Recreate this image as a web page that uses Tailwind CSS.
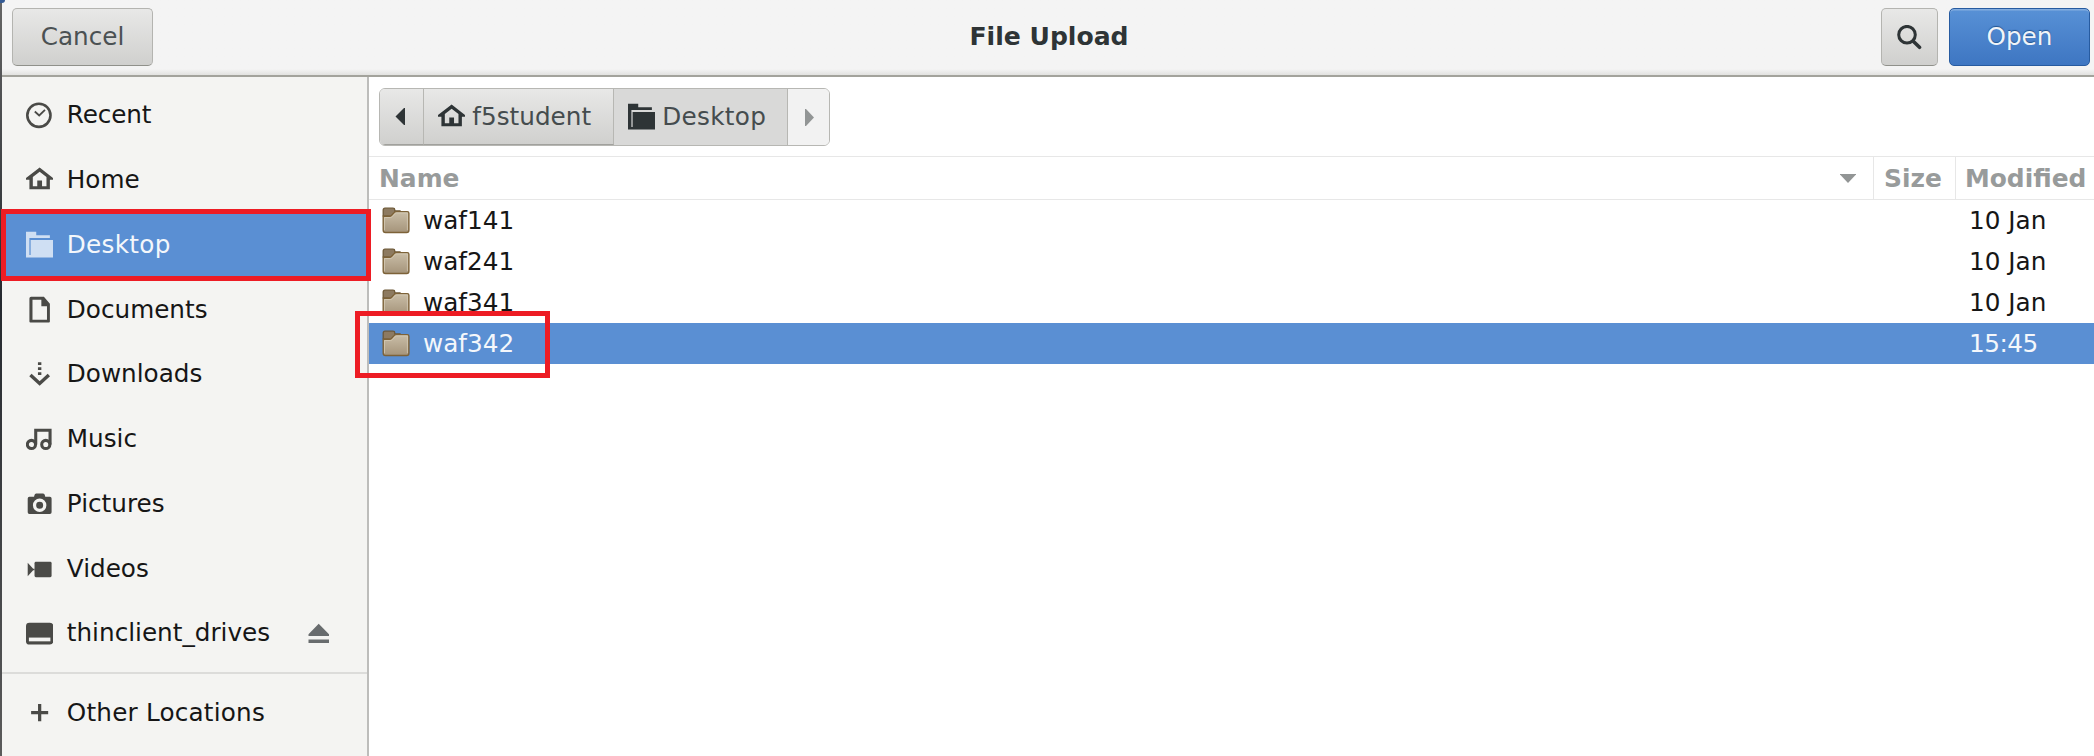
<!DOCTYPE html>
<html lang="en">
<head>
<meta charset="utf-8">
<title>File Upload</title>
<script src="https://cdn.jsdelivr.net/npm/@tailwindcss/browser@4"></script>
</head>
<body class="relative h-[756px] w-[2094px] overflow-hidden bg-white font-['DejaVu_Sans',sans-serif] text-[24.7px] leading-[30px] text-[#161616]">
<svg class="absolute size-0">
  <symbol id="home" viewBox="0 0 16 16"><path fill="currentColor" d="M8 .9 0 7.1V8h2v5.700h12V8h2v-.9L8 .9Zm0 2.400 4 3.100v5.400H9.400V8.500H6.600v3.300H4V6.400l4-3.100Z"/></symbol>
  <symbol id="folder" viewBox="0 0 16 16"><path fill="currentColor" d="M0 .5h6v2h8v1.600H2V14h.7V5.300H16v10.200H0V.5Z"/></symbol>
  <symbol id="filefolder" viewBox="0 0 28 28">
    <path fill="#8d7a60" stroke="#6d5837" stroke-width="1.300" d="M1.200 9V3q0-1.800 1.800-1.800h8q1.800 0 1.800 1.800v1H18v6Z"/>
    <path fill="url(#fg)" stroke="#7d6238" stroke-width="1.400" d="M1.200 9.200h6.500q1 0 1.800-.8l2.800-3q.7-.8 1.800-.8h11.200q1.600 0 1.600 1.600v17q0 2.300-2.300 2.300H3.500q-2.300 0-2.300-2.300Z"/>
    <path fill="none" stroke="#d9ceb9" stroke-opacity=".7" d="M2.500 23.300V10.500h6q1 0 1.800-.9l3-3.200q.5-.5 1.300-.5h10.800v17.200"/>
  </symbol>
  <defs><linearGradient id="fg" x1="0" y1="0" x2="0" y2="1"><stop offset="0" stop-color="#cabea8"/><stop offset="1" stop-color="#a5947a"/></linearGradient></defs>
</svg>
<div class="flex h-full">
  <div class="w-[2px] shrink-0 bg-linear-to-b from-[#666] via-[#25292f] via-40% to-[#5b5b5b]"></div>
  <div class="flex min-w-0 flex-1 flex-col">
    <header class="grid h-[77px] shrink-0 grid-cols-[1fr_auto_1fr] items-start border-b-2 border-[#a3a39c] bg-linear-to-b from-[#f4f4f4] from-92% to-[#e2e2e0] pt-2 pr-[4px] pl-[10px]">
      <button class="h-[58px] w-[141px] rounded-[5px] border-[1.5px] border-[#b4b4b0] border-b-[#90918b] bg-linear-to-b from-[#e8e8e7] to-[#d0d0ce] text-[#4b5153]">Cancel</button>
      <h1 class="relative -left-[2px] pt-[14px] text-[25.1px] font-bold text-[#2e3436]">File Upload</h1>
      <div class="flex justify-end gap-[11px]">
        <button class="flex h-[58px] w-[57px] items-center justify-center rounded-[5px] border-[1.5px] border-[#b4b4b0] border-b-[#90918b] bg-linear-to-b from-[#e8e8e7] to-[#d0d0ce] text-[#2e3436]">
          <svg class="size-[25px]" viewBox="0 0 25 25" fill="none" stroke="currentColor"><circle cx="10" cy="9.700" r="8.300" stroke-width="3"/><path stroke-width="3.600" stroke-linecap="round" d="m16.500 16.500 6 5.800"/></svg>
        </button>
        <button class="h-[58px] w-[141px] rounded-[5px] border-[1.5px] border-[#275ba0] bg-linear-to-b from-[#5891d6] to-[#3e76c2] text-[#f0f4f9] inset-shadow-[0_1.5px_0_#83ade0] text-shadow-[0_-1px_1px_#245590]">Open</button>
      </div>
    </header>
    <div class="flex min-h-0 flex-1">
      <aside class="w-[367px] shrink-0 border-r-2 border-[#bdbdbb] bg-[#f4f4f2] pt-[5px] [&_svg]:shrink-0">
        <nav class="flex flex-col text-[#161616]">
          <div class="flex h-[64.75px] items-center gap-[13.5px] pt-[2px] pl-6 tracking-[-0.15px]"><svg class="size-[27.3px] text-[#4a4a47]" viewBox="0 0 27.3 27.3" fill="none" stroke="currentColor"><circle cx="12.900" cy="13.300" r="11.600" stroke-width="2.600"/><path stroke-width="1.800" d="m8.800 9.500 4.400 4 5.800-5.700"/></svg><span>Recent</span></div>
          <div class="flex h-[64.75px] items-center gap-[13.5px] pt-[2px] pl-6"><svg class="size-[27.3px] text-[#4a4a47]"><use href="#home"/></svg><span>Home</span></div>
          <div class="flex h-[64.75px] items-center gap-[13.5px] bg-[#5a8fd3] pt-[2px] pl-6 tracking-[0.3px] text-[#f4f7fb]"><svg class="size-[27.3px] text-[#cfdff3]"><use href="#folder"/></svg><span>Desktop</span></div>
          <div class="flex h-[64.75px] items-center gap-[13.5px] pt-[2px] pl-6"><svg class="size-[27.3px] text-[#4a4a47]" viewBox="0 0 16 16"><path fill="currentColor" fill-rule="evenodd" d="M3 .5h7.500L14 4.500V15q0 .6-.6.6H2.600q-.6 0-.6-.6V1.500q0-1 1-1ZM3.800 2.200v11.700h8.500V6H9V2.200Z"/></svg><span>Documents</span></div>
          <div class="flex h-[64.75px] items-center gap-[13.5px] pt-[2px] pl-6"><svg class="size-[27.3px] text-[#4a4a47]" viewBox="0 0 16 16"><path fill="currentColor" d="M7 .7h2v1.600H7ZM7 3.700h2v1.600H7ZM7 6.600h2v1.600H7Z"/><path fill="none" stroke="currentColor" stroke-width="2" d="m2.600 8.200 5.400 5 5.400-5"/></svg><span>Downloads</span></div>
          <div class="flex h-[64.75px] items-center gap-[13.5px] pt-[2px] pl-6"><svg class="size-[27.3px] text-[#4a4a47]" viewBox="0 0 16 16" fill="none" stroke="currentColor" stroke-width="1.800"><circle cx="3.200" cy="11.400" r="2.400"/><circle cx="11.600" cy="11.400" r="2.400"/><path d="M5.700 11.500V3.100h8.400v8.400"/></svg><span>Music</span></div>
          <div class="flex h-[64.75px] items-center gap-[13.5px] pt-[2px] pl-6"><svg class="size-[27.3px] text-[#4a4a47]" viewBox="0 0 16 16"><path fill="currentColor" d="M6 2h4q.9 0 1 1l.3 1H14q1 0 1 1v8q0 1-1 1H2q-1 0-1-1V5q0-1 1-1h2.700L5 3q.1-1 1-1Z"/><circle cx="8" cy="9" r="3" fill="none" stroke="#f4f4f2" stroke-width="1.900"/></svg><span>Pictures</span></div>
          <div class="flex h-[64.75px] items-center gap-[13.5px] pt-[2px] pl-6"><svg class="size-[27.3px] text-[#4a4a47]" viewBox="0 0 16 16"><rect x="5" y="4" width="10" height="9" rx=".8" fill="currentColor"/><path fill="currentColor" d="M1 4.500 4.200 8H5v1h-.8L1 12.500Z"/></svg><span>Videos</span></div>
          <div class="flex h-[64.75px] items-center gap-[13.5px] pt-[2px] pl-6"><svg class="size-[27.3px] text-[#4a4a47]" viewBox="0 0 16 16"><rect y="1.600" width="16" height="12.800" rx="2" fill="currentColor"/><path fill="#f4f4f2" d="M1.700 10.300h12.600v2.200H1.700Z"/></svg><span>thinclient_drives</span><svg class="ml-[24px] h-[21px] w-[22px] text-[#686c6e]" viewBox="0 0 22 21"><path fill="currentColor" d="M10.700.7 21 11.200V13H.5v-1.800ZM.5 16.500H21V20H.5Z"/></svg></div>
        </nav>
        <div class="mt-[7px] h-[2px] bg-[#dcdcda]"></div>
        <div class="mt-[7px] flex h-[64.75px] items-center gap-[13.5px] pl-6 tracking-[0.2px]"><svg class="size-[27.3px] text-[#4a4a47]" viewBox="0 0 16 16"><path fill="none" stroke="currentColor" stroke-width="1.900" d="M3 8h10M8 3v10"/></svg><span>Other Locations</span></div>
      </aside>
      <main class="flex min-w-0 flex-1 flex-col bg-white">
        <div class="h-[79px] shrink-0 pt-[11px] pl-[10px]">
          <div class="flex h-[58px] w-[451px] overflow-hidden rounded-[6px] border-[1.5px] border-[#b7b7b3] text-[#454c4e]">
            <div class="flex w-[44px] items-center border-r-[1.5px] border-b border-[#b7b7b3] border-b-[#a1a19d] bg-linear-to-b from-[#e8e8e7] to-[#d0d0ce] pl-[15px]"><svg class="h-[17px] w-[10px]" viewBox="0 0 10 17"><path fill="#2e3436" d="M10 0v17H9L.5 8.500 9 0Z"/></svg></div>
            <div class="flex w-[190px] items-center gap-[7px] border-r-[1.5px] border-b border-[#b7b7b3] border-b-[#a1a19d] bg-linear-to-b from-[#e8e8e7] to-[#d0d0ce] pl-[14px]"><svg class="size-[27.3px] text-[#2e3436]"><use href="#home"/></svg><span>f5student</span></div>
            <div class="flex w-[174px] items-center gap-[7px] border-r-[1.5px] border-[#b7b7b3] bg-[#d9d9d8] pl-[14px] tracking-[0.3px]"><svg class="size-[27.3px] text-[#2e3436]"><use href="#folder"/></svg><span>Desktop</span></div>
            <div class="flex flex-1 items-center bg-[#f2f2f2] pl-[17px]"><svg class="h-[17px] w-[10px]" viewBox="0 0 10 17"><path fill="#929595" d="M0 0v17h1l8-8.500L1 0Z"/></svg></div>
          </div>
        </div>
        <div class="flex h-[44px] shrink-0 items-center border-y-[1.5px] border-[#e7e7e7] text-[24.9px] font-bold text-[#989b9b]">
          <div class="flex h-full w-[1505px] items-center justify-between border-r-[1.5px] border-[#e7e7e7] pt-px pr-[17px] pl-[10px]"><span>Name</span><svg class="h-[9px] w-[16px]" viewBox="0 0 16 9"><path fill="#929595" d="M0 0h16v.5L8 9 0 .5Z"/></svg></div>
          <div class="flex h-full w-[82px] items-center border-r-[1.5px] border-[#e7e7e7] pt-px pl-[10px]">Size</div>
          <div class="pt-px pl-[9px]">Modified</div>
        </div>
        <div class="flex h-[41px] items-center pl-[13px]"><svg class="size-[28px]"><use href="#filefolder"/></svg><span class="ml-[13px] flex-1">waf141</span><span class="w-[125px]">10 Jan</span></div>
        <div class="flex h-[41px] items-center pl-[13px]"><svg class="size-[28px]"><use href="#filefolder"/></svg><span class="ml-[13px] flex-1">waf241</span><span class="w-[125px]">10 Jan</span></div>
        <div class="flex h-[41px] items-center pl-[13px]"><svg class="size-[28px]"><use href="#filefolder"/></svg><span class="ml-[13px] flex-1">waf341</span><span class="w-[125px]">10 Jan</span></div>
        <div class="flex h-[41px] items-center bg-[#5a8fd3] pl-[13px] text-[#f4f7fb]"><svg class="size-[28px]"><use href="#filefolder"/></svg><span class="ml-[13px] flex-1">waf342</span><span class="w-[125px] tracking-[-0.5px]">15:45</span></div>
      </main>
    </div>
  </div>
</div>
<div class="absolute top-0 left-0 h-[3px] w-[5px] rounded-br-full bg-[#355b94]"></div>
<div class="absolute top-[209px] left-[1px] h-[72px] w-[370px] border-[5px] border-[#ed1c24]"></div>
<div class="absolute top-[311px] left-[355px] h-[67px] w-[195px] border-[5px] border-[#ed1c24]"></div>
</body>
</html>
